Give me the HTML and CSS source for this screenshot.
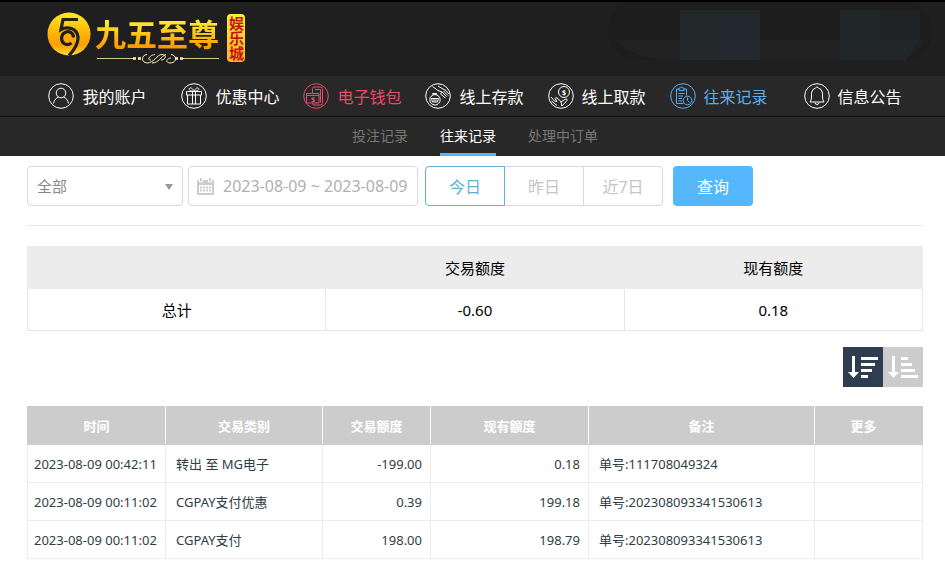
FILE: index.html
```html
<!DOCTYPE html>
<html lang="zh-CN">
<head>
    <meta charset="UTF-8">
    <meta name="viewport" content="width=device-width, initial-scale=1.0">
    <title>往来记录</title>
    <link rel="stylesheet" href="styles.css">
</head>

<body>

    <header class="header">
        <a href="#" class="logo">
            <svg class="logo-mark" viewBox="0 0 44 44">
                <defs>
                    <linearGradient id="gold" x1="0" y1="0" x2="0" y2="1">
                        <stop offset="0" stop-color="#ffe92a"/>
                        <stop offset="0.5" stop-color="#ffb400"/>
                        <stop offset="0.75" stop-color="#ff9e08"/>
                        <stop offset="1" stop-color="#ffdc30"/>
                    </linearGradient>
                </defs>
                <circle cx="22" cy="22" r="21.5" fill="url(#gold)"/>
                <g fill="none" stroke="#1f1f1f" stroke-width="3.2">
                    <path d="M31 7.500H16L14 17.500C20 14 30 16 31 25C31.500 32 27 38 22 43.500"/>
                    <path d="M26.500 25.500C26.500 21 22.500 19 19 20C14 21.500 13 28.500 17 31.500C19.500 33.200 22.500 32.500 24.500 31"/>
                </g>
            </svg>
            <span class="logo-name">
                <span class="logo-text">九五至尊</span>
                <svg class="logo-line" viewBox="0 0 126 12" fill="none" stroke="#d9c98a">
                    <path d="M2 5.500H40M86 5.500H124"/>
                    <path d="M38 5.500h3m2 0h3m34 0h3m2 0h3" stroke="#fff3b0" stroke-width="2.500"/>
                    <path d="M52 1.500C46 2 46 9.500 52 10C59 10 62 1.500 67 1.500C72 1.500 71 7 66 7M76 1.500C82 2 82 9.500 76 10M76 10C69 10 72 5 76 5M57 10C64 10 66 3 71 1.500M56 7C51 7 55 2 60 1.500" stroke="#fff3b0"/>
                </svg>
            </span>
            <span class="logo-badge">娱乐城</span>
        </a>
        <svg class="header-shade" viewBox="0 0 324 58">
            <rect width="324" height="58" rx="29" fill="#1d1d1d"/>
            <path d="M8 38H316Q310 54 290 58H56Q20 54 8 38" fill="#212121"/>
            <path d="M72 8h80v50h-80z" fill="#23282a"/>
            <path d="M112 14h35v24h-35z" fill="#222830"/>
            <path d="M112 38h35v20h-35z" fill="#242830"/>
            <path d="M232 8h80v30h-80z" fill="#1e2224"/>
            <path d="M232 8h40v50h-40zM272 38h40l-14 20h-26z" fill="#212628"/>
        </svg>
    </header>

    <nav class="nav">
        <a href="#" class="nav-item nav-first">
            <svg class="nav-icon" viewBox="0 0 26 26">
                <circle cx="13" cy="13" r="12.300"/>
                <circle cx="13" cy="10" r="4.800"/>
                <path d="M5.500 20.500C6 17 8 15 10.500 14.200M20.500 20.500C20 17 18 15 15.500 14.200"/>
            </svg>
            我的账户
        </a>
        <a href="#" class="nav-item">
            <svg class="nav-icon" viewBox="0 0 26 26">
                <circle cx="13" cy="13" r="12.300"/>
                <path d="M5.500 8.500h15v3.500h-15zM6.500 12v9h13v-9M11.500 8.500V21M14.500 8.500V21"/>
                <path d="M12 8.300C9 8 7.500 6.500 8.500 5.300S12 5.500 12.500 8M14 8.300C17 8 18.500 6.500 17.500 5.300S14 5.500 13.500 8"/>
            </svg>
            优惠中心
        </a>
        <a href="#" class="nav-item nav-red">
            <svg class="nav-icon" viewBox="0 0 26 26">
                <circle cx="13" cy="13" r="12.300"/>
                <path d="M9.500 10V5.500Q9.500 4 11 4H18Q19.500 4 19.500 5.500V20.500Q19.500 22 18 22H11Q9.500 22 9.500 20.500"/>
                <path d="M12 6.500h5.500V19.500M3.500 10.500h12.500v9.500H3.500zM3.500 12.500H16"/>
                <text x="8" y="19">$</text>
            </svg>
            电子钱包
        </a>
        <a href="#" class="nav-item">
            <svg class="nav-icon" viewBox="0 0 26 26">
                <circle cx="13" cy="13" r="12.300"/>
                <circle cx="10" cy="16.800" r="5.200"/>
                <path d="M6.500 15.500h7l-1 3.500H7.500zM9 15.500v3M11 15.500v3M8.500 12L7.500 10.500H11.500L11 12"/>
                <path d="M7.500 3.500L13 7.500L17 9L15.500 11L20.500 15M13 3L18 6L21 7.500L24 11M17 9L21.500 13.500M18.500 8L23 12.500"/>
            </svg>
            线上存款
        </a>
        <a href="#" class="nav-item">
            <svg class="nav-icon" viewBox="0 0 26 26">
                <circle cx="13" cy="13" r="12.300"/>
                <circle cx="16" cy="9" r="5.500"/>
                <text x="14" y="12">$</text>
                <path d="M3 14L6.500 18L9 18.500L7 15.500Q7.500 14 9 15L12.500 18Q14 20 13.500 23M3.500 18L9 22.500M12.500 19L18 16Q19.500 16 19 17.500L14 23"/>
            </svg>
            线上取款
        </a>
        <a href="#" class="nav-item nav-blue">
            <svg class="nav-icon" viewBox="0 0 26 26">
                <circle cx="13" cy="13" r="12.300"/>
                <path d="M9 6H6.500V20.500H13.500M14 6H16.500V12.500M9 7.500V5H10.500Q11.500 2.500 12.500 5H14V7.500zM8.500 10.500H14.500M8.500 13H13M8.500 15.500H12M8.500 18H12"/>
                <circle cx="17.500" cy="17.500" r="4.300"/>
                <path d="M17.500 14.500V17.500L19.500 19.500"/>
            </svg>
            往来记录
        </a>
        <a href="#" class="nav-item nav-last">
            <svg class="nav-icon" viewBox="0 0 26 26">
                <circle cx="13" cy="13" r="12.300"/>
                <path d="M6 19H20Q18.500 17 18.500 14V10Q18 6 14.500 5Q13 2.500 11.500 5Q8 6 7.500 10V14Q7.500 17 6 19zM11 19.500Q11 21.500 13 21.500T15 19.500"/>
            </svg>
            信息公告
        </a>
    </nav>

    <nav class="subnav">
        <a href="#" class="subnav-item">投注记录</a>
        <a href="#" class="subnav-item active">往来记录</a>
        <a href="#" class="subnav-item">处理中订单</a>
    </nav>

    <main class="main">
        <form class="filter">
            <div class="select-box">
                <select class="type-select" aria-label="交易类别">
                    <option>全部</option>
                </select>
            </div>
            <label class="date-box">
                <svg class="date-icon" viewBox="0 0 17 17">
                    <path d="M1 2H16Q17 2 17 3V16Q17 17 16 17H1Q0 17 0 16V3Q0 2 1 2z" fill="#ccc"/>
                    <path d="M2 7h13v8H2z" fill="#fff"/>
                    <path d="M2.500 -1h3v5h-3zM11.500 -1h3v5h-3z" fill="#ccc" stroke="#fff"/>
                    <path d="M3 9.500h11M3 12.500h11" stroke="#ccc" stroke-width="2" stroke-dasharray="2 1"/>
                </svg>
                <input type="text" class="date-input" aria-label="日期" value="2023-08-09 ~ 2023-08-09">
            </label>
            <div class="day-group">
                <button type="button" class="day-btn selected">今日</button>
                <button type="button" class="day-btn">昨日</button>
                <button type="button" class="day-btn">近7日</button>
            </div>
            <button type="button" class="search-btn">查询</button>
        </form>

        <table class="total-table">
            <thead>
                <tr>
                    <th></th>
                    <th>交易额度</th>
                    <th>现有额度</th>
                </tr>
            </thead>
            <tbody>
                <tr>
                    <td>总计</td>
                    <td>-0.60</td>
                    <td>0.18</td>
                </tr>
            </tbody>
        </table>

        <div class="sort">
            <button type="button" class="sort-btn on" aria-label="降序">
                <svg viewBox="0 0 40 40">
                    <path d="M9 9h3v16h4l-5.500 6L5 25h4z"/>
                    <path d="M18 10h17v3H18zM18 16h14v3H18zM18 22h11v3H18zM18 28h7v3h-7z"/>
                </svg>
            </button>
            <button type="button" class="sort-btn" aria-label="升序">
                <svg viewBox="0 0 40 40">
                    <path d="M9 9h3v16h4l-5.500 6L5 25h4z"/>
                    <path d="M18 10h7v3h-7zM18 16h11v3H18zM18 22h14v3H18zM18 28h17v3H18z"/>
                </svg>
            </button>
        </div>

        <table class="list-table">
            <colgroup>
                <col class="col-time">
                <col class="col-type">
                <col class="col-amount">
                <col class="col-balance">
                <col class="col-note">
                <col class="col-more">
            </colgroup>
            <thead>
                <tr>
                    <th>时间</th>
                    <th>交易类别</th>
                    <th>交易额度</th>
                    <th>现有额度</th>
                    <th>备注</th>
                    <th class="more">更多</th>
                </tr>
            </thead>
            <tbody>
                <tr>
                    <td class="time">2023-08-09 00:42:11</td>
                    <td>转出 至 MG电子</td>
                    <td class="num">-199.00</td>
                    <td class="num">0.18</td>
                    <td>单号:111708049324</td>
                    <td></td>
                </tr>
                <tr>
                    <td class="time">2023-08-09 00:11:02</td>
                    <td>CGPAY支付优惠</td>
                    <td class="num">0.39</td>
                    <td class="num">199.18</td>
                    <td>单号:202308093341530613</td>
                    <td></td>
                </tr>
                <tr>
                    <td class="time">2023-08-09 00:11:02</td>
                    <td>CGPAY支付</td>
                    <td class="num">198.00</td>
                    <td class="num">198.79</td>
                    <td>单号:202308093341530613</td>
                    <td></td>
                </tr>
            </tbody>
        </table>
    </main>

</body>
</html>
```

FILE: styles.css
```css
* {
    box-sizing: border-box;
}

body {
    margin: 0;
    background-color: #fff;
    font-family: "Noto Sans", "Noto Sans CJK SC", sans-serif;
    font-size: 16px;
    color: #000;
}

a {
    color: inherit;
    text-decoration: none;
}

button, input, select {
    font-family: inherit;
    font-size: 16px;
    margin: 0;
}

button {
    padding: 0;
    cursor: pointer;
}

/* 顶部 */
.header {
    display: flex;
    justify-content: space-between;
    height: 76px;
    padding: 0 13px 0 47px;
    border-top: 2px solid #000;
    background-color: #1f1f1f;
}

.logo {
    display: flex;
    align-items: flex-start;
    padding-top: 10px;
}

.logo-mark {
    width: 44px;
    height: 44px;
}

.logo-name {
    display: flex;
    flex-direction: column;
    margin: 3px 6px 0 4px;
}

.logo-text {
    font-size: 31px;
    line-height: 38px;
    font-weight: bold;
    background: linear-gradient(#ffe92a 20%, #ff9800 85%);
    -webkit-background-clip: text;
    background-clip: text;
    color: transparent;
}

.logo-line {
    width: 126px;
    height: 12px;
}

.logo-badge {
    width: 18px;
    height: 48px;
    margin-top: 2px;
    padding-top: 2px;
    border-radius: 4px;
    background: linear-gradient(#ffec3d, #ffb41a);
    writing-mode: vertical-rl;
    font-size: 15px;
    line-height: 18px;
    font-weight: bold;
    color: #c4141a;
}

.header-shade {
    width: 324px;
    height: 58px;
}

/* 主菜单 */
.nav {
    display: flex;
    justify-content: center;
    gap: 24px;
    height: 41px;
    padding: 0 22px 0 27px;
    border-bottom: 1px solid #111;
    background-color: #282828;
    color: #fff;
}

.nav-item {
    display: flex;
    align-items: center;
    gap: 8px;
    white-space: nowrap;
}

.nav-first {
    margin-right: 11px;
}

.nav-last {
    margin-left: 12px;
}

.nav-red {
    color: #e8486b;
}

.nav-blue {
    color: #58aef0;
}

.nav-icon {
    width: 26px;
    height: 26px;
    fill: none;
    stroke: currentColor;
}

.nav-icon text {
    font-size: 7px;
    font-weight: bold;
    fill: currentColor;
    stroke: none;
}

/* 子菜单 */
.subnav {
    display: flex;
    justify-content: center;
    gap: 32px;
    height: 39px;
    padding: 0 22px 0 27px;
    background-color: #282828;
    font-size: 14px;
    line-height: 37px;
    color: #777;
}

.subnav-item.active {
    border-bottom: 3px solid #5bb2f5;
    color: #fff;
}

.main {
    padding: 10px 22px 16px 27px;
}

/* 查询条件 */
.filter {
    display: flex;
    height: 60px;
    padding-bottom: 19px;
    border-bottom: 1px solid #e6e6e6;
}

.select-box {
    position: relative;
    width: 156px;
    margin-right: 5px;
}

.select-box::after {
    content: "";
    position: absolute;
    top: 18px;
    right: 10px;
    border: 4px solid transparent;
    border-top: 6px solid #999;
    border-bottom: 0;
    pointer-events: none;
}

.type-select {
    width: 100%;
    height: 40px;
    padding: 0 9px;
    border: 1px solid #d9d9d9;
    border-radius: 4px;
    background-color: #fff;
    appearance: none;
    font-size: 15px;
    color: #888;
}

.date-box {
    display: flex;
    align-items: center;
    width: 230px;
    height: 40px;
    margin-right: 7px;
    padding-left: 8px;
    border: 1px solid #d9d9d9;
    border-radius: 4px;
}

.date-icon {
    flex: none;
    width: 17px;
    height: 17px;
    margin-right: 9px;
}

.date-input {
    flex: 1;
    min-width: 0;
    padding: 0;
    border: 0;
    background: none;
    outline: none;
    color: #b0b0b0;
}

.day-group {
    display: flex;
    height: 40px;
    margin-right: 10px;
}

.day-btn {
    width: 80px;
    height: 40px;
    border: 1px solid #d9d9d9;
    background-color: #fff;
    color: #c5c5c5;
}

.day-btn + .day-btn {
    margin-left: -1px;
}

.day-btn:first-child {
    border-radius: 4px 0 0 4px;
}

.day-btn:last-child {
    border-radius: 0 4px 4px 0;
}

.day-btn.selected {
    z-index: 1;
    border-color: #63afd8;
    color: #63afd8;
}

.search-btn {
    width: 80px;
    height: 40px;
    border: 0;
    border-radius: 4px;
    background-color: #55b8ff;
    color: #fff;
}

/* 表格 */
table {
    width: 100%;
    border-collapse: collapse;
    table-layout: fixed;
}

th, td {
    padding: 0;
}

.total-table {
    margin-top: 20px;
    font-size: 15px;
    text-align: center;
}

.total-table th {
    height: 42px;
    border: 1px solid #ececec;
    background-color: #ececec;
    font-weight: normal;
}

.total-table td {
    height: 42px;
    border: 1px solid #e6e6e6;
}

.sort {
    display: flex;
    justify-content: flex-end;
    margin: 16px 0 19px;
}

.sort-btn {
    width: 40px;
    height: 40px;
    border: 0;
    background-color: #ccc;
}

.sort-btn svg {
    display: block;
    fill: #fff;
}

.sort-btn.on {
    background-color: #2f3d50;
}

.list-table {
    font-size: 13px;
    color: #2f3d45;
}

.col-time {
    width: 138px;
}

.col-type {
    width: 157px;
}

.col-amount {
    width: 108px;
}

.col-balance {
    width: 158px;
}

.col-more {
    width: 108px;
}

.list-table th {
    height: 38px;
    border: 1px solid #ccc;
    border-right-color: #fff;
    border-left-color: #fff;
    background-color: #ccc;
    color: #fff;
}

.list-table th:first-child {
    border-left-color: #ccc;
}

.list-table th.more {
    padding-right: 10px;
    border-right-color: #ccc;
}

.list-table td {
    height: 38px;
    padding: 0 10px;
    border: 1px solid #ececec;
    white-space: nowrap;
}

.list-table td.time {
    padding: 0 6px;
}

.list-table td.num {
    padding-right: 8px;
    text-align: right;
}
```
